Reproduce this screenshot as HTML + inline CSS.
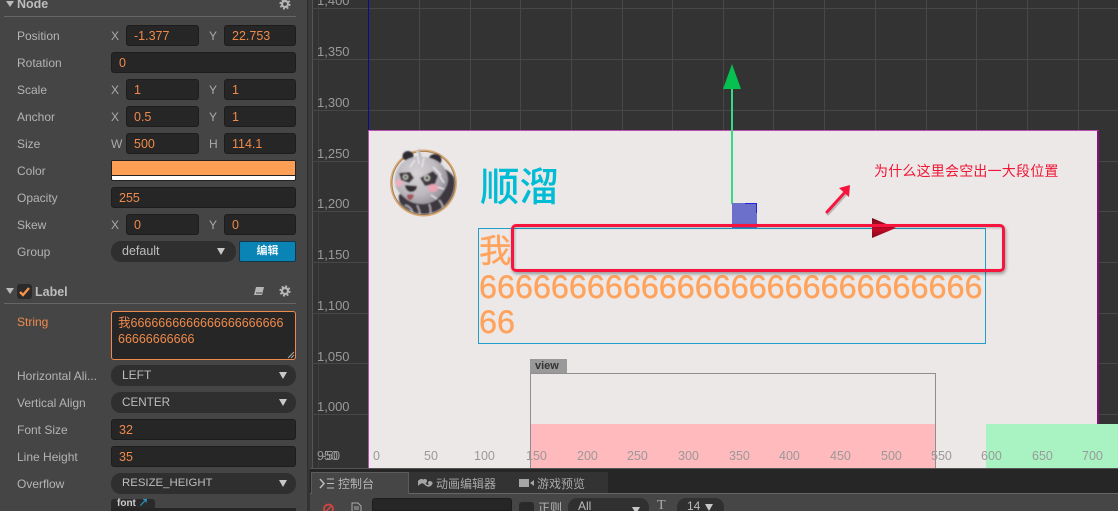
<!DOCTYPE html>
<html><head><meta charset="utf-8"><style>
html,body{margin:0;padding:0;background:#333}
#r{position:relative;width:1118px;height:511px;overflow:hidden;background:#333;font-family:"Liberation Sans","Noto Sans CJK SC",sans-serif}
#r div{position:absolute;box-sizing:border-box;white-space:nowrap}
.l{left:17px;font-size:12px;line-height:14px;color:#b4b4b4}
.a{font-size:12px;line-height:14px;color:#aaa}
.i{height:21px;background:#262626;border:1px solid #1d1d1d;border-radius:3px;color:#f08a4b;font-size:12.5px;line-height:20px;padding-left:7px}
.s{height:21px;left:111px;width:185px;background:#2f2f2f;border-radius:10px;color:#bdbdbd;font-size:12px;line-height:21px;padding-left:11px}
.t{position:absolute;right:9px;top:7px;width:0;height:0;border-left:4px solid transparent;border-right:4px solid transparent;border-top:7px solid #c8c8c8}
.g{background:#474747}
.y{left:317px;font-size:13px;line-height:15px;color:#9a9a9a}
.x{top:449px;font-size:12.5px;line-height:14px;color:#999}
</style></head><body><div id="r">

<div style="left:0;top:0;width:307px;height:511px;background:#454545"></div>
<div style="left:307px;top:0;width:1px;height:468px;background:#2c2c2c"></div>
<div style="left:308px;top:0;width:4px;height:468px;background:#3a3a3a"></div>

<div style="left:6px;top:1px;width:0;height:0;border-left:4px solid transparent;border-right:4px solid transparent;border-top:6px solid #bbb"></div>
<div style="left:17px;top:-3px;font-size:12.5px;line-height:15px;font-weight:bold;color:#bdbdbd">Node</div>
<svg style="position:absolute;left:279px;top:-2px" width="12" height="12" viewBox="0 0 12 12"><circle cx="6" cy="6" r="3" fill="none" stroke="#b5b5b5" stroke-width="2.200"/><circle cx="6" cy="6" r="4.800" fill="none" stroke="#b5b5b5" stroke-width="1.600" stroke-dasharray="2 1.770"/></svg>
<div style="left:4px;top:16px;width:292px;height:1px;background:#666"></div>

<div class="l" style="top:29px">Position</div>
<div class="a" style="left:111px;top:29px">X</div><div class="i" style="left:126px;top:25px;width:73px">-1.377</div>
<div class="a" style="left:209px;top:29px">Y</div><div class="i" style="left:224px;top:25px;width:72px">22.753</div>

<div class="l" style="top:56px">Rotation</div>
<div class="i" style="left:111px;top:52px;width:185px">0</div>

<div class="l" style="top:83px">Scale</div>
<div class="a" style="left:111px;top:83px">X</div><div class="i" style="left:126px;top:79px;width:73px">1</div>
<div class="a" style="left:209px;top:83px">Y</div><div class="i" style="left:224px;top:79px;width:72px">1</div>

<div class="l" style="top:110px">Anchor</div>
<div class="a" style="left:111px;top:110px">X</div><div class="i" style="left:126px;top:106px;width:73px">0.5</div>
<div class="a" style="left:209px;top:110px">Y</div><div class="i" style="left:224px;top:106px;width:72px">1</div>

<div class="l" style="top:137px">Size</div>
<div class="a" style="left:111px;top:137px">W</div><div class="i" style="left:126px;top:133px;width:73px">500</div>
<div class="a" style="left:209px;top:137px">H</div><div class="i" style="left:224px;top:133px;width:72px">114.1</div>

<div class="l" style="top:164px">Color</div>
<div style="left:111px;top:160px;width:185px;height:21px;background:#fff;border:1px solid #222;border-radius:2px"></div>
<div style="left:112px;top:161px;width:183px;height:14px;background:#ff9f55"></div>
<div style="left:112px;top:175px;width:183px;height:1px;background:#222"></div>

<div class="l" style="top:191px">Opacity</div>
<div class="i" style="left:111px;top:187px;width:185px">255</div>

<div class="l" style="top:218px">Skew</div>
<div class="a" style="left:111px;top:218px">X</div><div class="i" style="left:126px;top:214px;width:73px">0</div>
<div class="a" style="left:209px;top:218px">Y</div><div class="i" style="left:224px;top:214px;width:72px">0</div>

<div class="l" style="top:245px">Group</div>
<div class="s" style="top:241px;width:125px;font-size:12.500px">default<span class="t" style="right:11px"></span></div>
<div style="left:239px;top:241px;width:57px;height:21px;background:#0a83b5;border:1px solid #14384a;border-radius:2px;color:#e8f4f8;font-size:11px;line-height:19px;text-align:center;font-weight:bold">编辑</div>

<div style="left:6px;top:288px;width:0;height:0;border-left:4px solid transparent;border-right:4px solid transparent;border-top:6px solid #bbb"></div>
<div style="left:17px;top:284px;width:15px;height:15px;background:#2a2a2a;border-radius:3px"></div>
<svg style="position:absolute;left:17px;top:284px" width="15" height="15"><path d="M3 8l3 3 6-7" fill="none" stroke="#f59245" stroke-width="2.400"/></svg>
<div style="left:35px;top:285px;font-size:12.5px;line-height:15px;font-weight:bold;color:#bdbdbd">Label</div>
<svg style="position:absolute;left:253px;top:286px" width="12" height="11"><path d="M3 1h8l-2 8H1z" fill="#b5b5b5"/><path d="M3 7h6" stroke="#454545"/></svg>
<svg style="position:absolute;left:279px;top:285px" width="12" height="12" viewBox="0 0 12 12"><circle cx="6" cy="6" r="3" fill="none" stroke="#b5b5b5" stroke-width="2.200"/><circle cx="6" cy="6" r="4.800" fill="none" stroke="#b5b5b5" stroke-width="1.600" stroke-dasharray="2 1.770"/></svg>
<div style="left:4px;top:303px;width:292px;height:1px;background:#666"></div>

<div class="l" style="top:315px;color:#f08a4b">String</div>
<div style="left:111px;top:311px;width:185px;height:49px;background:#262626;border:1px solid #f08a4b;border-radius:3px"></div>
<div style="left:118px;top:315px;font-size:12.5px;line-height:16px;color:#f08a4b">我6666666666666666666666<br>66666666666</div>
<svg style="position:absolute;left:287px;top:351px" width="8" height="8"><path d="M1 7l6-6M4 7l3-3" stroke="#aaa"/></svg>

<div class="l" style="top:369px">Horizontal Ali...</div>
<div class="s" style="top:365px">LEFT<span class="t"></span></div>
<div class="l" style="top:396px">Vertical Align</div>
<div class="s" style="top:392px;font-size:11.700px">CENTER<span class="t"></span></div>
<div class="l" style="top:423px">Font Size</div>
<div class="i" style="left:111px;top:419px;width:185px">32</div>
<div class="l" style="top:450px">Line Height</div>
<div class="i" style="left:111px;top:446px;width:185px">35</div>
<div class="l" style="top:477px">Overflow</div>
<div class="s" style="top:473px;font-size:11.400px">RESIZE_HEIGHT<span class="t"></span></div>
<div style="left:111px;top:499px;width:44px;height:12px;background:#2a2a2a;border-radius:3px 3px 0 0;color:#ccc;font-size:10px;line-height:10px;padding-left:6px;font-weight:bold">font <span style="color:#2a9fd0">&#8599;</span></div>
<div style="left:111px;top:508px;width:185px;height:3px;background:#262626"></div>

<div style="left:312px;top:0;width:1px;height:468px;background:#555"></div>
<div style="left:318px;top:0;width:1px;height:468px;background:#3e3e3e"></div>
<div class="g" style="left:419px;top:0;width:1px;height:130px"></div>
<div class="g" style="left:470px;top:0;width:1px;height:130px"></div>
<div class="g" style="left:520px;top:0;width:1px;height:130px"></div>
<div class="g" style="left:571px;top:0;width:1px;height:130px"></div>
<div class="g" style="left:622px;top:0;width:1px;height:130px"></div>
<div class="g" style="left:672px;top:0;width:1px;height:130px"></div>
<div class="g" style="left:723px;top:0;width:1px;height:130px"></div>
<div class="g" style="left:773px;top:0;width:1px;height:130px"></div>
<div class="g" style="left:824px;top:0;width:1px;height:130px"></div>
<div class="g" style="left:875px;top:0;width:1px;height:130px"></div>
<div class="g" style="left:926px;top:0;width:1px;height:130px"></div>
<div class="g" style="left:976px;top:0;width:1px;height:130px"></div>
<div class="g" style="left:1027px;top:0;width:1px;height:130px"></div>
<div class="g" style="left:1078px;top:0;width:1px;height:130px"></div>
<div class="g" style="left:312px;top:8px;width:806px;height:1px"></div>
<div class="g" style="left:312px;top:59px;width:806px;height:1px"></div>
<div class="g" style="left:312px;top:110px;width:806px;height:1px"></div>
<div class="g" style="left:312px;top:161px;width:806px;height:1px"></div>
<div class="g" style="left:312px;top:211px;width:806px;height:1px"></div>
<div class="g" style="left:312px;top:262px;width:806px;height:1px"></div>
<div class="g" style="left:312px;top:313px;width:806px;height:1px"></div>
<div class="g" style="left:312px;top:363px;width:806px;height:1px"></div>
<div class="g" style="left:312px;top:414px;width:806px;height:1px"></div>

<div class="y" style="top:-7px">1,400</div>
<div class="y" style="top:44px">1,350</div>
<div class="y" style="top:95px">1,300</div>
<div class="y" style="top:146px">1,250</div>
<div class="y" style="top:196px">1,200</div>
<div class="y" style="top:247px">1,150</div>
<div class="y" style="top:298px">1,100</div>
<div class="y" style="top:349px">1,050</div>
<div class="y" style="top:399px">1,000</div>
<div class="y" style="top:449px;font-size:12.5px">950</div>
<div class="y" style="top:449px;left:322px;font-size:12.5px">-50</div>

<div style="left:368px;top:0;width:1px;height:130px;background:#0a0a96"></div>

<div style="left:368px;top:130px;width:731px;height:338px;background:#ece8e8;border-top:1px solid #b84fb0;border-left:1px solid #b84fb0;border-right:2px solid #84127e"></div>

<div style="left:530px;top:424px;width:405px;height:44px;background:#ffbabd"></div>
<div style="left:986px;top:424px;width:132px;height:44px;background:#a9f3c2"></div>
<div style="left:530px;top:373px;width:406px;height:95px;border:1px solid #8e8e8e;border-bottom:0"></div>
<div style="left:530px;top:359px;width:37px;height:14px;background:#999;color:#333;font-size:11px;font-weight:bold;line-height:14px;padding-left:5px">view</div>

<svg style="position:absolute;left:389px;top:145px" width="70" height="74" viewBox="0 0 70 74">
<defs>
<filter id="b" x="-10%" y="-10%" width="120%" height="120%"><feGaussianBlur stdDeviation="0.700"/></filter>
<radialGradient id="f" cx="0.400" cy="0.450" r="0.650"><stop offset="0" stop-color="#d6d3d6"/><stop offset="0.600" stop-color="#bdb9bf"/><stop offset="1" stop-color="#8d8890"/></radialGradient>
<clipPath id="c"><circle cx="34.500" cy="38" r="31"/></clipPath>
</defs>
<circle cx="34.500" cy="38" r="33.500" fill="#d8ab78"/>
<circle cx="34.500" cy="38" r="31.500" fill="#e6e2e2" stroke="#9c7448" stroke-width=".8"/>
<g filter="url(#b)">
<g clip-path="url(#c)">
<path d="M40 20C55 20 68 30 68 42c0 14-8 28-30 30C20 72 8 60 10 50z" fill="#3d3740"/>
<path d="M16 60c6 2 8 6 8 11M28 60c2 4 3 7 3 11M40 59c2 4 2 7 1 11M50 55c3 3 4 6 4 10" stroke="#aaa6ac" stroke-width="1.800" fill="none"/>
</g>
<ellipse cx="19" cy="11" rx="5.500" ry="5" fill="#2f2a33"/><ellipse cx="46" cy="15" rx="6.500" ry="6" fill="#2f2a33"/>
<path d="M6 36C6 22 15 13 27 12l3-9 3 9c13 0 25 8 26 22 0 5-2 9-5 13-4 7-11 12-21 12-7 0-13-2-18-7C10 48 6 43 6 36z" fill="url(#f)"/>
<path d="M28 6l2 13M35 13l-2 9M44 22l8 8M50 30l5 8M48 42l7 2M42 50l6 4M26 15l-5 7" stroke="#ececec" stroke-width="1.300" fill="none"/>
<path d="M10 28l11-1 4 6-5 5-8-3zM31 33l13-7 5 5-3 8-10 2z" fill="#3d3840"/>
<circle cx="16.500" cy="32" r="2.800" fill="#bdbfb2"/><circle cx="38" cy="33" r="3.200" fill="#bdbfb2"/>
<circle cx="16.500" cy="32" r="1.200" fill="#222"/><circle cx="38" cy="33" r="1.400" fill="#222"/>
<ellipse cx="10" cy="38" rx="3.500" ry="3.500" fill="#eeb0bc"/><ellipse cx="44" cy="43" rx="5" ry="4" fill="#eaa4b4"/>
<path d="M16 40l12 1c0 4-3 6-6 6-3 0-6-3-6-7z" fill="#332e32"/>
<path d="M18 50c2-1 5-1 7 0-1 3-2 5-4 5s-3-2-3-5z" fill="#a4525a"/>
</g>
</svg>
<div style="left:480px;top:158px;font-size:39.500px;line-height:54px;color:#00bcd4;font-weight:500;font-family:'Noto Sans CJK SC',sans-serif">顺溜</div>

<div style="left:478px;top:228px;width:508px;height:116px;border:1px solid #1f9fc9"></div>
<div style="left:479px;top:234px;font-size:32.350px;line-height:35.500px;color:#ffa35c;-webkit-text-stroke:.4px #ffa35c;font-family:'Liberation Sans','Noto Sans CJK SC',sans-serif">我<br>6666666666666666666666666666<br>66</div>

<div style="left:731px;top:88px;width:2px;height:116px;background:#35db80"></div>
<svg style="position:absolute;left:722px;top:63px" width="20" height="27"><path d="M10 1l9 25H1z" fill="#06c050"/></svg>
<div style="left:732px;top:203px;width:25px;height:25px;background:#6d70cb"></div>
<div style="left:745px;top:203px;width:12px;height:10px;border-top:1px solid #2222dd;border-right:1px solid #2222dd"></div>
<svg style="position:absolute;left:871px;top:217px" width="26" height="22"><defs><linearGradient id="q" x1="0" y1="0" x2="0" y2="1"><stop offset="0" stop-color="#6a0a18"/><stop offset=".5" stop-color="#d00a2a"/><stop offset="1" stop-color="#7a0a18"/></linearGradient></defs><path d="M1 1l24 10L1 21z" fill="url(#q)"/></svg>

<div style="left:511px;top:224px;width:494px;height:48px;border:3px solid #f8153d;border-radius:5px;box-shadow:1px 2px 3px rgba(0,0,0,.35),inset 1px 1px 2px rgba(0,0,0,.25)"></div>
<svg style="position:absolute;left:820px;top:180px" width="36" height="38" style="overflow:visible"><path d="M7 32L27 10" stroke="rgba(0,0,0,.2)" stroke-width="3" stroke-linecap="round" transform="translate(1 2)"/><path d="M7 32L27 10" stroke="#f8153d" stroke-width="3" stroke-linecap="round"/><path d="M19 8l11-3-1 12z" fill="#f8153d"/></svg>
<div style="left:874px;top:162px;font-size:14px;line-height:18px;color:#f01535;letter-spacing:0.2px">为什么这里会空出一大段位置</div>

<div class="x" style="left:373px">0</div>
<div class="x" style="left:424px">50</div>
<div class="x" style="left:474px">100</div>
<div class="x" style="left:526px">150</div>
<div class="x" style="left:577px">200</div>
<div class="x" style="left:627px">250</div>
<div class="x" style="left:678px">300</div>
<div class="x" style="left:729px">350</div>
<div class="x" style="left:779px">400</div>
<div class="x" style="left:830px">450</div>
<div class="x" style="left:881px">500</div>
<div class="x" style="left:931px">550</div>
<div class="x" style="left:981px">600</div>
<div class="x" style="left:1032px">650</div>
<div class="x" style="left:1082px">700</div>

<div style="left:310px;top:468px;width:808px;height:25px;background:#262626;border-top:1px solid #555"></div>
<div style="left:310px;top:493px;width:808px;height:18px;background:#464646;border-top:1px solid #666"></div>
<div style="left:409px;top:472px;width:199px;height:21px;background:#333"></div>
<div style="left:311px;top:472px;width:98px;height:22px;background:#464646;border:1px solid #5c5c5c;border-bottom:0"></div>
<svg style="position:absolute;left:319px;top:478px" width="16" height="11"><path d="M1 1l4 4.500-4 4.500" fill="none" stroke="#bbb" stroke-width="1.500"/><path d="M8 1h7M8 5.500h7M8 10h7" stroke="#bbb"/></svg>
<div style="left:338px;top:476px;font-size:12px;line-height:16px;color:#b5b5b5">控制台</div>
<svg style="position:absolute;left:417px;top:477px" width="17" height="12"><path d="M1 4c3-3 5-3 7 1s4 4 8 0c-1 5-5 6-8 3S4 6 1 9z" fill="#a5a5a5"/><circle cx="3" cy="5" r="2" fill="#a5a5a5"/><circle cx="8" cy="4" r="2" fill="#a5a5a5"/><circle cx="13" cy="6" r="2" fill="#a5a5a5"/></svg>
<div style="left:436px;top:476px;font-size:12px;line-height:16px;color:#aaa">动画编辑器</div>
<svg style="position:absolute;left:519px;top:478px" width="15" height="10"><path d="M0 1h10v8H0zM11 5l4-3v6z" fill="#a5a5a5"/></svg>
<div style="left:537px;top:476px;font-size:12px;line-height:16px;color:#aaa">游戏预览</div>

<svg style="position:absolute;left:322px;top:503px" width="14" height="8"><circle cx="6.500" cy="6" r="4.500" fill="none" stroke="#d9433f" stroke-width="1.700"/><path d="M3.500 9l6-6" stroke="#d9433f" stroke-width="1.500"/></svg>
<svg style="position:absolute;left:351px;top:502px" width="11" height="9"><path d="M1 9V1h6l3 3v5M3 5h5M3 7h5" fill="none" stroke="#aaa"/></svg>
<div style="left:372px;top:498px;width:140px;height:13px;background:#262626;border:1px solid #1d1d1d;border-radius:3px 3px 0 0"></div>
<div style="left:519px;top:502px;width:15px;height:9px;background:#2a2a2a;border-radius:3px 3px 0 0"></div>
<div style="left:538px;top:501px;font-size:12px;line-height:14px;color:#b5b5b5">正则</div>
<div style="left:568px;top:498px;width:81px;height:13px;background:#303030;border-radius:9px 9px 0 0;color:#bbb;font-size:12px;line-height:17px;padding-left:10px">All<span class="t" style="top:9px;right:9px"></span></div>
<div style="left:657px;top:499px;font-family:'Liberation Serif',serif;font-size:14px;line-height:14px;color:#aaa">T</div>
<div style="left:677px;top:498px;width:47px;height:13px;background:#303030;border-radius:9px 9px 0 0;color:#bbb;font-size:12px;line-height:17px;padding-left:10px">14<span class="t" style="top:6px;right:11px"></span></div>

</div></body></html>
